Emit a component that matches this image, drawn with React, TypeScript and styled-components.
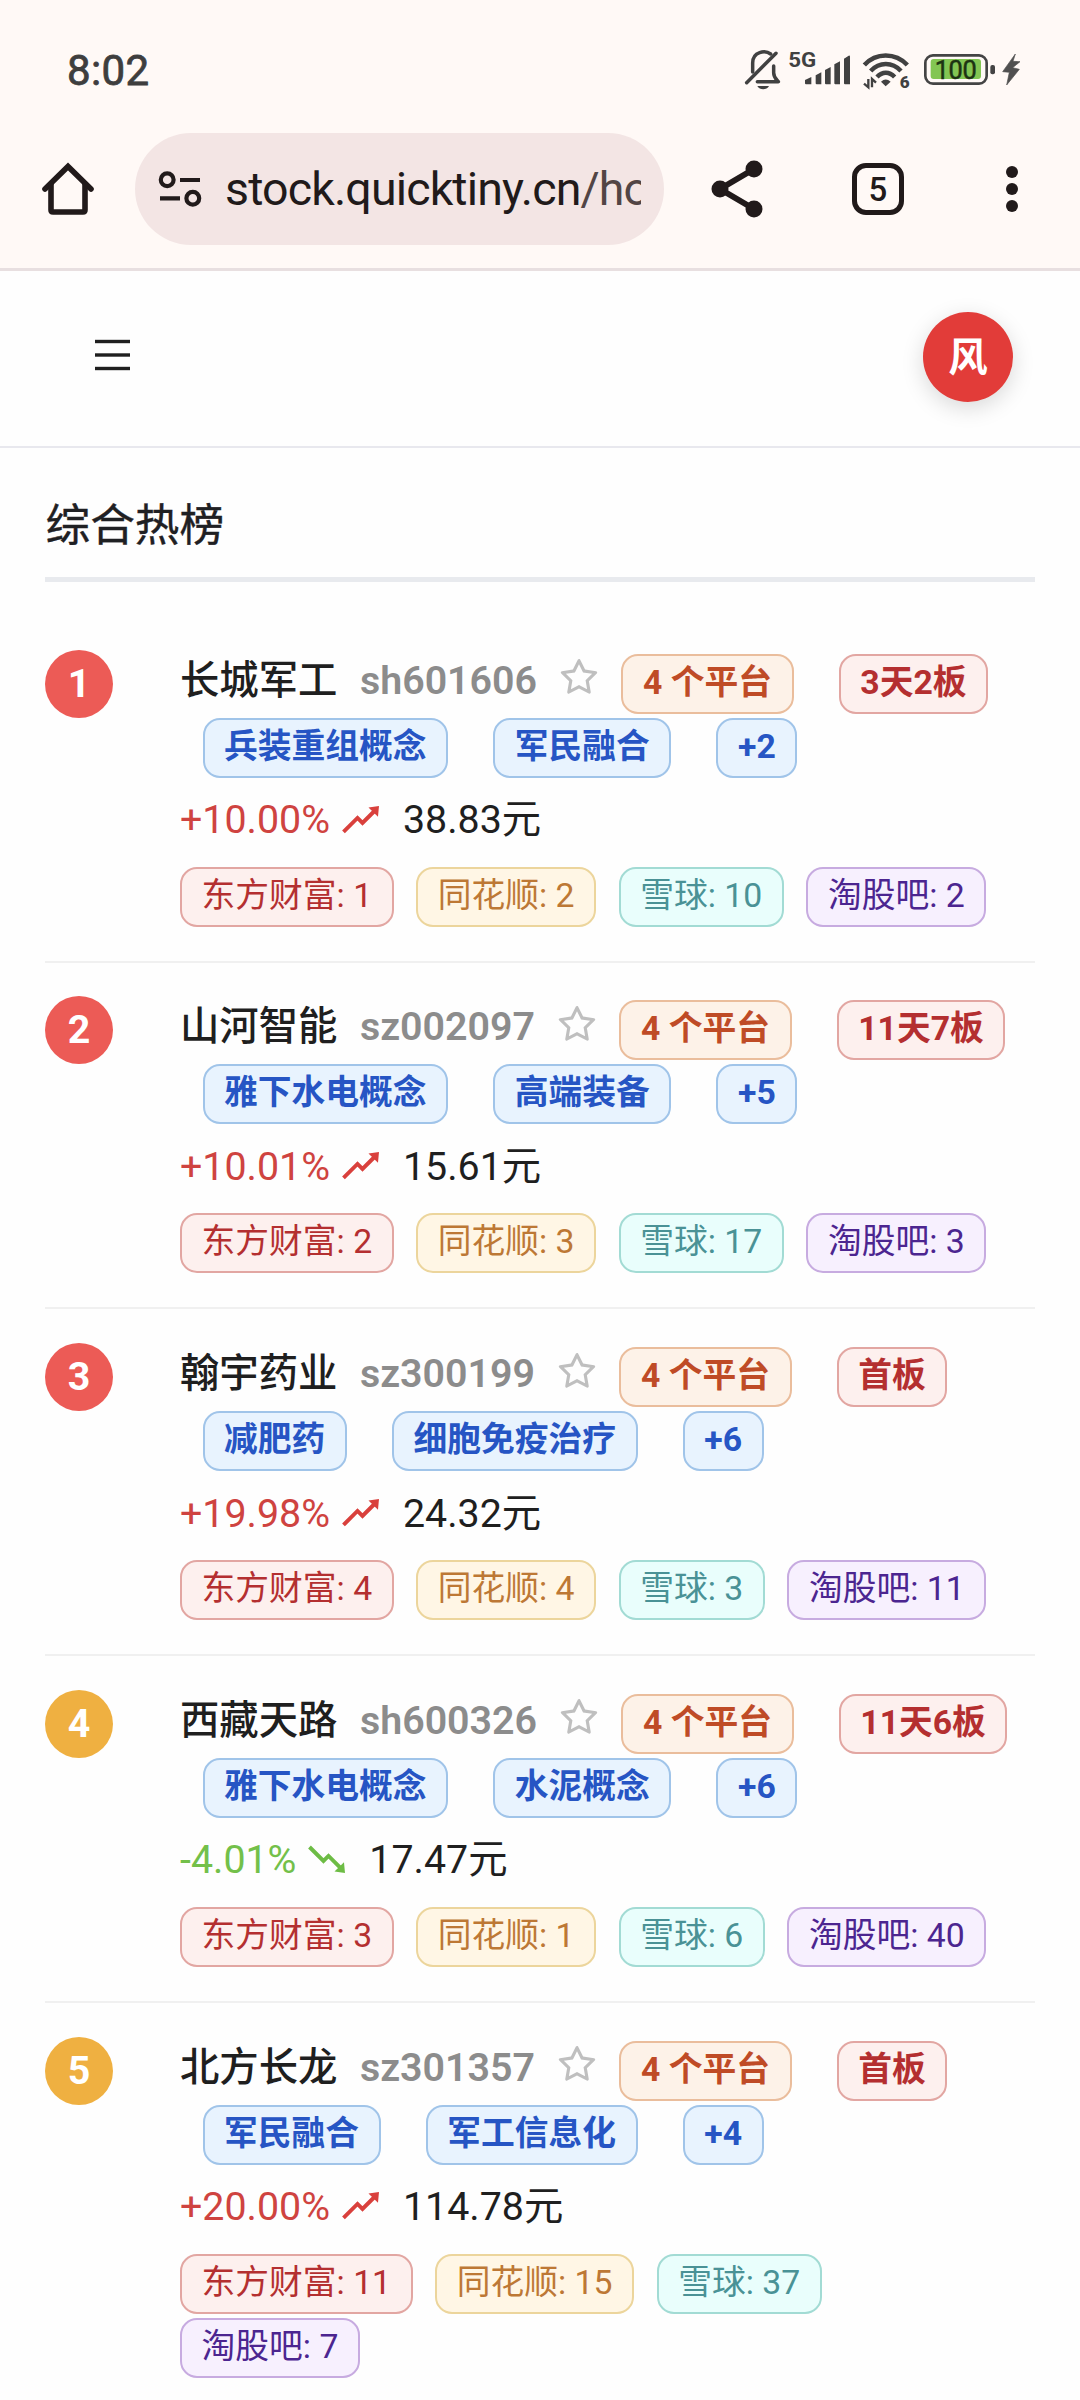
import React from "react";
import styled, { createGlobalStyle } from "styled-components";

const Global = createGlobalStyle`
  * { box-sizing: border-box; }
  html, body { margin: 0; padding: 0; background: #fefefe; }
  body { font-family: Roboto, "Noto Sans CJK SC", sans-serif; color: #1f1f1f; }
  svg { display: block; flex: none; overflow: visible; }
`;

const Screen = styled.div`
  width: 1080px;
  height: 2400px;
  overflow: hidden;
  background: #fefefe;
`;

const Chrome = styled.div`
  height: 271px;
  background: #fff9f6;
  border-bottom: 3px solid #e8dfe0;
`;

const StatusBar = styled.div`
  display: flex;
  align-items: flex-start;
  justify-content: space-between;
  height: 133px;
  padding: 50px 59px 0 67px;
`;

const Clock = styled.span`
  font-size: 42px;
  line-height: 41px;
  font-weight: 400;
  letter-spacing: 0.4px;
  color: #3e3e3e;
  -webkit-text-stroke: 0.8px #3e3e3e;
`;

const StatusIcons = styled.div`
  display: flex;
`;

const Slot = styled.div<{ $gap: number }>`
  margin-left: ${(p) => p.$gap}px;
`;

const Toolbar = styled.div`
  display: flex;
  align-items: center;
  height: 112px;
  padding: 0 38px 0 38px;
`;

const UrlPill = styled.div`
  display: flex;
  align-items: center;
  width: 529px;
  height: 112px;
  margin-left: 37px;
  padding: 0 23px 0 22px;
  border-radius: 56px;
  background: #f3e5e4;
`;

const Url = styled.div`
  flex: 1;
  margin-left: 22px;
  overflow: hidden;
  white-space: nowrap;
  font-size: 46.5px;
  letter-spacing: -0.85px;
  line-height: 68px;
  color: #211a1a;
  span { color: #524545; }
`;

const Actions = styled.div`
  flex: 1;
  display: flex;
  align-items: center;
  justify-content: space-between;
  margin-left: 44px;
`;

const TabCount = styled.div`
  width: 52px;
  height: 52px;
  margin-left: 6px;
  border: 5.5px solid #211a1a;
  border-radius: 14px;
  font-size: 33px;
  font-weight: 500;
  line-height: 43px;
  text-align: center;
  color: #211a1a;
`;

const AppHeader = styled.header`
  display: flex;
  align-items: center;
  justify-content: space-between;
  height: 177px;
  padding: 0 67px 4px 95px;
  border-bottom: 2px solid #e8e8ee;
`;

const Avatar = styled.div`
  width: 90px;
  height: 90px;
  border-radius: 50%;
  background: #e23c39;
  color: #fff;
  font-size: 39.375px;
  font-weight: 700;
  line-height: 91px;
  text-align: center;
  box-shadow: 0 6px 22px rgba(0, 0, 0, 0.15);
`;

const Main = styled.main`
  padding: 0 45px;
`;

const Heading = styled.h1`
  height: 134px;
  margin: 0 0 34px;
  padding-top: 43px;
  border-bottom: 5px solid #e8eaee;
  font-size: 44.6px;
  font-weight: 400;
  line-height: 70px;
  color: #1f2023;
  text-indent: 0.6px;
  -webkit-text-stroke: 0.4px #1f2023;
`;

const Row = styled.section`
  display: flex;
  align-items: flex-start;
  padding: 33.75px 0 33.95px;
  border-bottom: 2px solid #f0f0f0;
`;

const Rank = styled.div<{ $top: boolean }>`
  flex: none;
  width: 68px;
  height: 68px;
  margin-right: 67px;
  border-radius: 50%;
  background: ${(p) => (p.$top ? "#ec5b56" : "#efb041")};
  color: #fff;
  font-size: 39.375px;
  font-weight: 700;
  line-height: 68px;
  text-align: center;
`;

const Body = styled.div`
  flex: 1;
  padding-top: 4px;
`;

const TitleLine = styled.div`
  display: flex;
  height: 60px;
  gap: 22.5px;
`;

const Name = styled.span`
  font-size: 39.375px;
  font-weight: 500;
  line-height: 53px;
`;

const Code = styled(Name)`
  font-weight: 600;
  color: #8c8c8c;
`;

const StarBox = styled.span`
  margin: 0 -2.3px;
  padding-top: 2.5px;
`;

const TagGroup = styled.div<{ $indent?: boolean }>`
  display: flex;
  gap: 45px;
  margin: ${(p) => (p.$indent ? "4px 0 0 22.5px" : "0")};
`;

type Tone = "orange" | "red" | "blue" | "gold" | "cyan" | "purple";

const tones: Record<Tone, [string, string, string]> = {
  orange: ["#fdf2e8", "#eabd9c", "#bf4b26"],
  red: ["#fdf0ee", "#e2a6a2", "#b42f30"],
  blue: ["#e8f3fe", "#a0c4e9", "#2655c4"],
  gold: ["#fff6e5", "#ecd59c", "#bd7835"],
  cyan: ["#e9fefc", "#a2dbd4", "#4a9296"],
  purple: ["#f7f0fe", "#c7abe0", "#4c2590"],
};

const Tag = styled.span<{ $tone: Tone; $bold?: boolean }>`
  height: 60px;
  padding: 0 19.6px;
  border: 2px solid ${(p) => tones[p.$tone][1]};
  border-radius: 17px;
  background: ${(p) => tones[p.$tone][0]};
  color: ${(p) => tones[p.$tone][2]};
  font-size: 33.75px;
  font-weight: ${(p) => (p.$bold ? 700 : 400)};
  line-height: 53px;
  white-space: nowrap;
`;

const PriceLine = styled.div`
  display: flex;
  align-items: center;
  height: 62px;
  margin: 11.5px 0 15.5px;
  font-size: 39.375px;
  line-height: 62px;
`;

const Change = styled.span<{ $up: boolean }>`
  display: flex;
  align-items: center;
  gap: 11px;
  margin-right: 22.5px;
  color: ${(p) => (p.$up ? "#cf4340" : "#73c04a")};
`;

const Sources = styled.div`
  display: flex;
  flex-wrap: wrap;
  gap: 4.6px 22.5px;
  max-width: 833px;
`;

const BellOff = () => (
  <svg width="38" height="40" viewBox="72 60 114 120" fill="none" stroke="#414141" strokeWidth="10.5" strokeLinecap="round" strokeLinejoin="round">
    <path d="M80 158 L168 70" />
    <path d="M98 126 V99 C98 64 136 60 152 72" />
    <path d="M161 108 V128 C161 142 168 147 175 155 H112" />
    <path d="M112 168 H147 C140 181 119 181 112 168Z" fill="#414141" stroke="none" />
  </svg>
);

const Signal = () => (
  <svg width="64" height="40" viewBox="204 60 192 120" fill="#414141">
    <text x="205" y="111" fontSize="62" fontWeight="700" fontFamily="Roboto" textLength="84" lengthAdjust="spacingAndGlyphs">5G</text>
    <path d="M255 150 L274 141 V163 H258 Q255 163 255 160Z M287 136 L304 127 V163 H290 Q287 163 287 160Z M315 120 L332 111 V163 H318 Q315 163 315 160Z M343 103 L360 94 V163 H346 Q343 163 343 160Z M372 86 L386 77 Q390 76 390 80 V163 H375 Q372 163 372 160Z" />
  </svg>
);

const Wifi = () => (
  <svg width="48" height="40" viewBox="426 60 144 120" fill="none" stroke="#414141" strokeWidth="13.5">
    <path d="M433 105 C468 67 526 67 562 105" />
    <path d="M452 123 C478 95 517 95 543 123" />
    <path d="M471 141 C487 124 508 124 524 141" />
    <path d="M483 155 Q497 142 512 155 L497 169Z" fill="#414141" stroke="none" />
    <path d="M445 147 V172 L432 161 M456 172 V147 L468 158" strokeWidth="7" />
    <text x="539" y="173" fontSize="51" fontWeight="900" fontFamily="Roboto" fill="#414141" stroke="none">6</text>
  </svg>
);

const Battery = () => (
  <svg width="73" height="40" viewBox="609 60 219 120">
    <rect x="616" y="76" width="184" height="85" rx="23" fill="none" stroke="#444" strokeWidth="8" />
    <rect x="632" y="87" width="151" height="60" rx="9" fill="#83c653" />
    <rect x="811" y="105" width="14" height="28" rx="6" fill="#444" />
    <text x="644" y="146" fontSize="76" fontFamily="Roboto" fontWeight="400" fill="#1d3312" stroke="#1d3312" strokeWidth="1.5" textLength="126">100</text>
  </svg>
);

const Bolt = () => (
  <svg width="20" height="40" viewBox="843 60 60 120" fill="#505050">
    <path d="M886 72 L848 125 L868 127 L860 165 L898 118 L878 113 L900 95 L879 94Z" stroke="#505050" strokeWidth="2" />
  </svg>
);

const Home = () => (
  <svg width="60" height="60" viewBox="38 159 60 60" fill="none" stroke="#211a1a" strokeWidth="5.6" strokeLinecap="round">
    <path d="M45 189 L68 166.5 L91 189" />
    <path d="M51 184 V210 Q51 212 53 212 H83 Q85 212 85 210 V184" strokeLinejoin="round" />
  </svg>
);

const Tune = () => (
  <svg width="46" height="40" viewBox="157 169 46 40" fill="none" stroke="#211a1a" strokeWidth="4.2">
    <circle cx="167.2" cy="179.8" r="6.4" />
    <path d="M180 180 H200 M160 198.3 H180" />
    <circle cx="192.8" cy="198.3" r="6.4" />
  </svg>
);

const Share = () => (
  <svg width="60" height="60" viewBox="708 159 60 60" fill="#211a1a">
    <path d="M754 169 L720 189 L754 209" fill="none" stroke="#211a1a" strokeWidth="6" />
    <circle cx="754" cy="169" r="8.5" />
    <circle cx="720" cy="189" r="8.5" />
    <circle cx="754" cy="209" r="8.5" />
  </svg>
);

const Dots = () => (
  <svg width="60" height="60" viewBox="982 159 60 60" fill="#211a1a">
    <circle cx="1012" cy="172" r="6" />
    <circle cx="1012" cy="189" r="6" />
    <circle cx="1012" cy="206" r="6" />
  </svg>
);

const MenuIcon = styled.svg`
  margin-bottom: 3px;
`;

const Menu = () => (
  <MenuIcon width="36" height="32" viewBox="0 0 36 32" fill="#1f1f1f">
    <rect x="0" y="0.8" width="35" height="3.4" />
    <rect x="0" y="14.3" width="35" height="3.4" />
    <rect x="0" y="27.8" width="35" height="3.4" />
  </MenuIcon>
);

const Star = () => (
  <svg width="44" height="44" viewBox="0 0 1024 1024" fill="#bfbfbf">
    <path d="M908.1 353.1l-253.9-36.9L540.7 86.1c-3.1-6.3-8.2-11.4-14.5-14.5-15.8-7.8-35-1.3-42.9 14.5L369.8 316.2l-253.9 36.9c-7 1-13.4 4.3-18.3 9.3a32.05 32.05 0 00.6 45.3l183.7 179.1-43.4 252.9a31.95 31.95 0 0046.4 33.7L512 754l227.1 119.4c6.2 3.3 13.4 4.4 20.3 3.2 17.4-3 29.1-19.5 26.1-36.9l-43.4-252.9 183.7-179.1c5-4.9 8.3-11.3 9.3-18.3 2.7-17.5-9.5-33.7-27-36.3zM664.8 561.6l36.1 210.3L512 672.7 323.1 772l36.1-210.3-152.8-149L417.6 382 512 190.7 606.4 382l211.2 30.7-152.8 148.9z" />
  </svg>
);

const Trend = ({ up }: { up: boolean }) => (
  <svg width="39.4" height="39.4" viewBox="0 0 39.4 39.4" fill="none" stroke={up ? "#d9403c" : "#6dbc45"} strokeWidth="3.9">
    <g transform={up ? undefined : "translate(0 37) scale(1 -1)"}>
      <path d="M2.5 31 L16.5 17 L21.5 22 L34 9.5" />
      <path d="M27.5 6.5 L38 5 L37 15.8Z" fill={up ? "#d9403c" : "#6dbc45"} stroke="none" />
    </g>
  </svg>
);

interface Stock {
  name: string;
  code: string;
  streak: string;
  concepts: string[];
  change: string;
  price: string;
  ranks: number[];
}

const stocks: Stock[] = [
  { name: "长城军工", code: "sh601606", streak: "3天2板", concepts: ["兵装重组概念", "军民融合", "+2"], change: "+10.00%", price: "38.83元", ranks: [1, 2, 10, 2] },
  { name: "山河智能", code: "sz002097", streak: "11天7板", concepts: ["雅下水电概念", "高端装备", "+5"], change: "+10.01%", price: "15.61元", ranks: [2, 3, 17, 3] },
  { name: "翰宇药业", code: "sz300199", streak: "首板", concepts: ["减肥药", "细胞免疫治疗", "+6"], change: "+19.98%", price: "24.32元", ranks: [4, 4, 3, 11] },
  { name: "西藏天路", code: "sh600326", streak: "11天6板", concepts: ["雅下水电概念", "水泥概念", "+6"], change: "-4.01%", price: "17.47元", ranks: [3, 1, 6, 40] },
  { name: "北方长龙", code: "sz301357", streak: "首板", concepts: ["军民融合", "军工信息化", "+4"], change: "+20.00%", price: "114.78元", ranks: [11, 15, 37, 7] },
];

const platforms: [string, Tone][] = [
  ["东方财富", "red"],
  ["同花顺", "gold"],
  ["雪球", "cyan"],
  ["淘股吧", "purple"],
];

const StockRow = ({ stock, index }: { stock: Stock; index: number }) => {
  const up = stock.change.startsWith("+");
  return (
    <Row>
      <Rank $top={index < 3}>{index + 1}</Rank>
      <Body>
        <TitleLine>
          <Name>{stock.name}</Name>
          <Code>{stock.code}</Code>
          <StarBox><Star /></StarBox>
          <TagGroup>
            <Tag $tone="orange" $bold>4 个平台</Tag>
            <Tag $tone="red" $bold>{stock.streak}</Tag>
          </TagGroup>
        </TitleLine>
        <TagGroup $indent>
          {stock.concepts.map((c) => <Tag key={c} $tone="blue" $bold>{c}</Tag>)}
        </TagGroup>
        <PriceLine>
          <Change $up={up}>{stock.change}<Trend up={up} /></Change>
          <span>{stock.price}</span>
        </PriceLine>
        <Sources>
          {platforms.map(([label, tone], i) => (
            <Tag key={label} $tone={tone}>{`${label}: ${stock.ranks[i]}`}</Tag>
          ))}
        </Sources>
      </Body>
    </Row>
  );
};

export default function App() {
  return (
    <Screen>
      <Global />
      <Chrome>
        <StatusBar>
          <Clock>8:02</Clock>
          <StatusIcons>
            <BellOff />
            <Slot $gap={6}><Signal /></Slot>
            <Slot $gap={10}><Wifi /></Slot>
            <Slot $gap={13}><Battery /></Slot>
            <Slot $gap={5}><Bolt /></Slot>
          </StatusIcons>
        </StatusBar>
        <Toolbar>
          <Home />
          <UrlPill>
            <Tune />
            <Url>stock.quicktiny.cn<span>/ho</span></Url>
          </UrlPill>
          <Actions>
            <Share />
            <TabCount>5</TabCount>
            <Dots />
          </Actions>
        </Toolbar>
      </Chrome>
      <AppHeader>
        <Menu />
        <Avatar>风</Avatar>
      </AppHeader>
      <Main>
        <Heading>综合热榜</Heading>
        {stocks.map((s, i) => <StockRow key={s.code} stock={s} index={i} />)}
      </Main>
    </Screen>
  );
}
